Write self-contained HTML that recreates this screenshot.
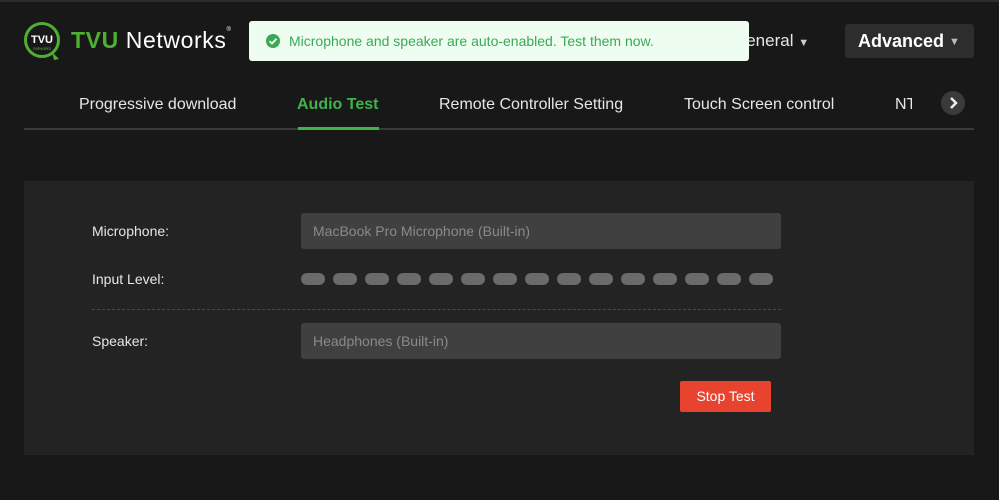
<!DOCTYPE html>
<html><head><meta charset="utf-8"><style>
*{margin:0;padding:0;box-sizing:border-box}
body{width:999px;height:500px;background:#181818;font-family:"Liberation Sans",Arial,sans-serif;position:relative;overflow:hidden;border-top:2px solid #2c2c2c}
.a{position:absolute}
.tab{position:absolute;top:94px;font-size:16px;color:#e6e6e6;white-space:nowrap}
.lbl{position:absolute;left:92px;font-size:14px;color:#e6e6e6}
.inp{position:absolute;left:301px;width:480px;height:36px;background:#404040;border-radius:3px;color:#8a8a8a;font-size:14px;padding:10px 12px}
.pill{position:absolute;top:271px;width:24px;height:12px;border-radius:6px;background:#6b6b6b}
</style></head><body>
<svg class="a" style="left:23px;top:19px" width="40" height="42" viewBox="0 0 40 42"><circle cx="19" cy="19" r="16.5" fill="none" stroke="#4db032" stroke-width="3"/><path d="M29 31 L36 38 L31 39Z" fill="#4db032"/><text x="19" y="22" font-family="Liberation Sans" font-weight="bold" font-size="11" fill="#fff" text-anchor="middle">TVU</text><text x="19" y="29" font-family="Liberation Sans" font-size="4.5" fill="#4db032" text-anchor="middle">networks</text></svg>
<div class="a" style="left:71px;top:25px;font-size:23px;color:#fff;white-space:nowrap;letter-spacing:0.6px"><b style="color:#4db032">TVU</b> Networks<span style="font-size:6px;vertical-align:top">®</span></div>
<div class="a" style="left:733px;top:29px;font-size:17px;color:#e6e6e6;white-space:nowrap">General <span style="font-size:11px;color:#ccc">▼</span></div>
<div class="a" style="left:845px;top:22px;width:129px;height:34px;background:#2d2d2d;border-radius:3px;color:#fff;font-weight:bold;font-size:18px;padding:7px 0 0 13px;white-space:nowrap">Advanced <span style="font-size:11px;color:#bbb;vertical-align:2px">▼</span></div>
<div class="a" style="left:249px;top:19px;width:500px;height:40px;background:#effdf1;border-radius:3px;color:#3aa957;font-size:14px;padding:12px 40px"><svg class="a" style="left:16px;top:12px" width="16" height="16"><circle cx="8" cy="8" r="7" fill="#3aa957"/><path d="M4.5 8.2 L7 10.5 L11.5 5.8" stroke="#fff" stroke-width="1.8" fill="none"/></svg>Microphone and speaker are auto-enabled. Test them now.</div>
<div class="tab" style="left:79px">Progressive download</div>
<div class="tab" style="left:297px;color:#3fb24a;font-weight:bold">Audio Test</div>
<div class="tab" style="left:439px">Remote Controller Setting</div>
<div class="tab" style="left:684px">Touch Screen control</div>
<div class="tab" style="left:895px;width:17px;overflow:hidden">NTP</div>
<div class="a" style="left:941px;top:89px;width:24px;height:24px;border-radius:12px;background:#3a3a3a"><svg width="24" height="24"><path d="M10 7 L15 12 L10 17" stroke="#eee" stroke-width="2.5" fill="none"/></svg></div>
<div class="a" style="left:24px;top:126px;width:950px;height:2px;background:#3a3a3a"></div>
<div class="a" style="left:298px;top:125px;width:81px;height:3px;background:#3fb24a"></div>
<div class="a" style="left:24px;top:179px;width:950px;height:274px;background:#232323"></div>
<div class="lbl" style="top:221px">Microphone:</div>
<div class="inp" style="top:211px">MacBook Pro Microphone (Built-in)</div>
<div class="lbl" style="top:269px">Input Level:</div>
<div class="pill" style="left:301px"></div><div class="pill" style="left:333px"></div><div class="pill" style="left:365px"></div><div class="pill" style="left:397px"></div><div class="pill" style="left:429px"></div><div class="pill" style="left:461px"></div><div class="pill" style="left:493px"></div><div class="pill" style="left:525px"></div><div class="pill" style="left:557px"></div><div class="pill" style="left:589px"></div><div class="pill" style="left:621px"></div><div class="pill" style="left:653px"></div><div class="pill" style="left:685px"></div><div class="pill" style="left:717px"></div><div class="pill" style="left:749px"></div>
<div class="a" style="left:92px;top:307px;width:689px;border-top:1px dashed #4a4a4a"></div>
<div class="lbl" style="top:331px">Speaker:</div>
<div class="inp" style="top:321px">Headphones (Built-in)</div>
<div class="a" style="left:680px;top:379px;width:91px;height:31px;background:#e8432f;border-radius:2px;color:#fff;font-size:14px;text-align:center;line-height:31px">Stop Test</div>
</body></html>
